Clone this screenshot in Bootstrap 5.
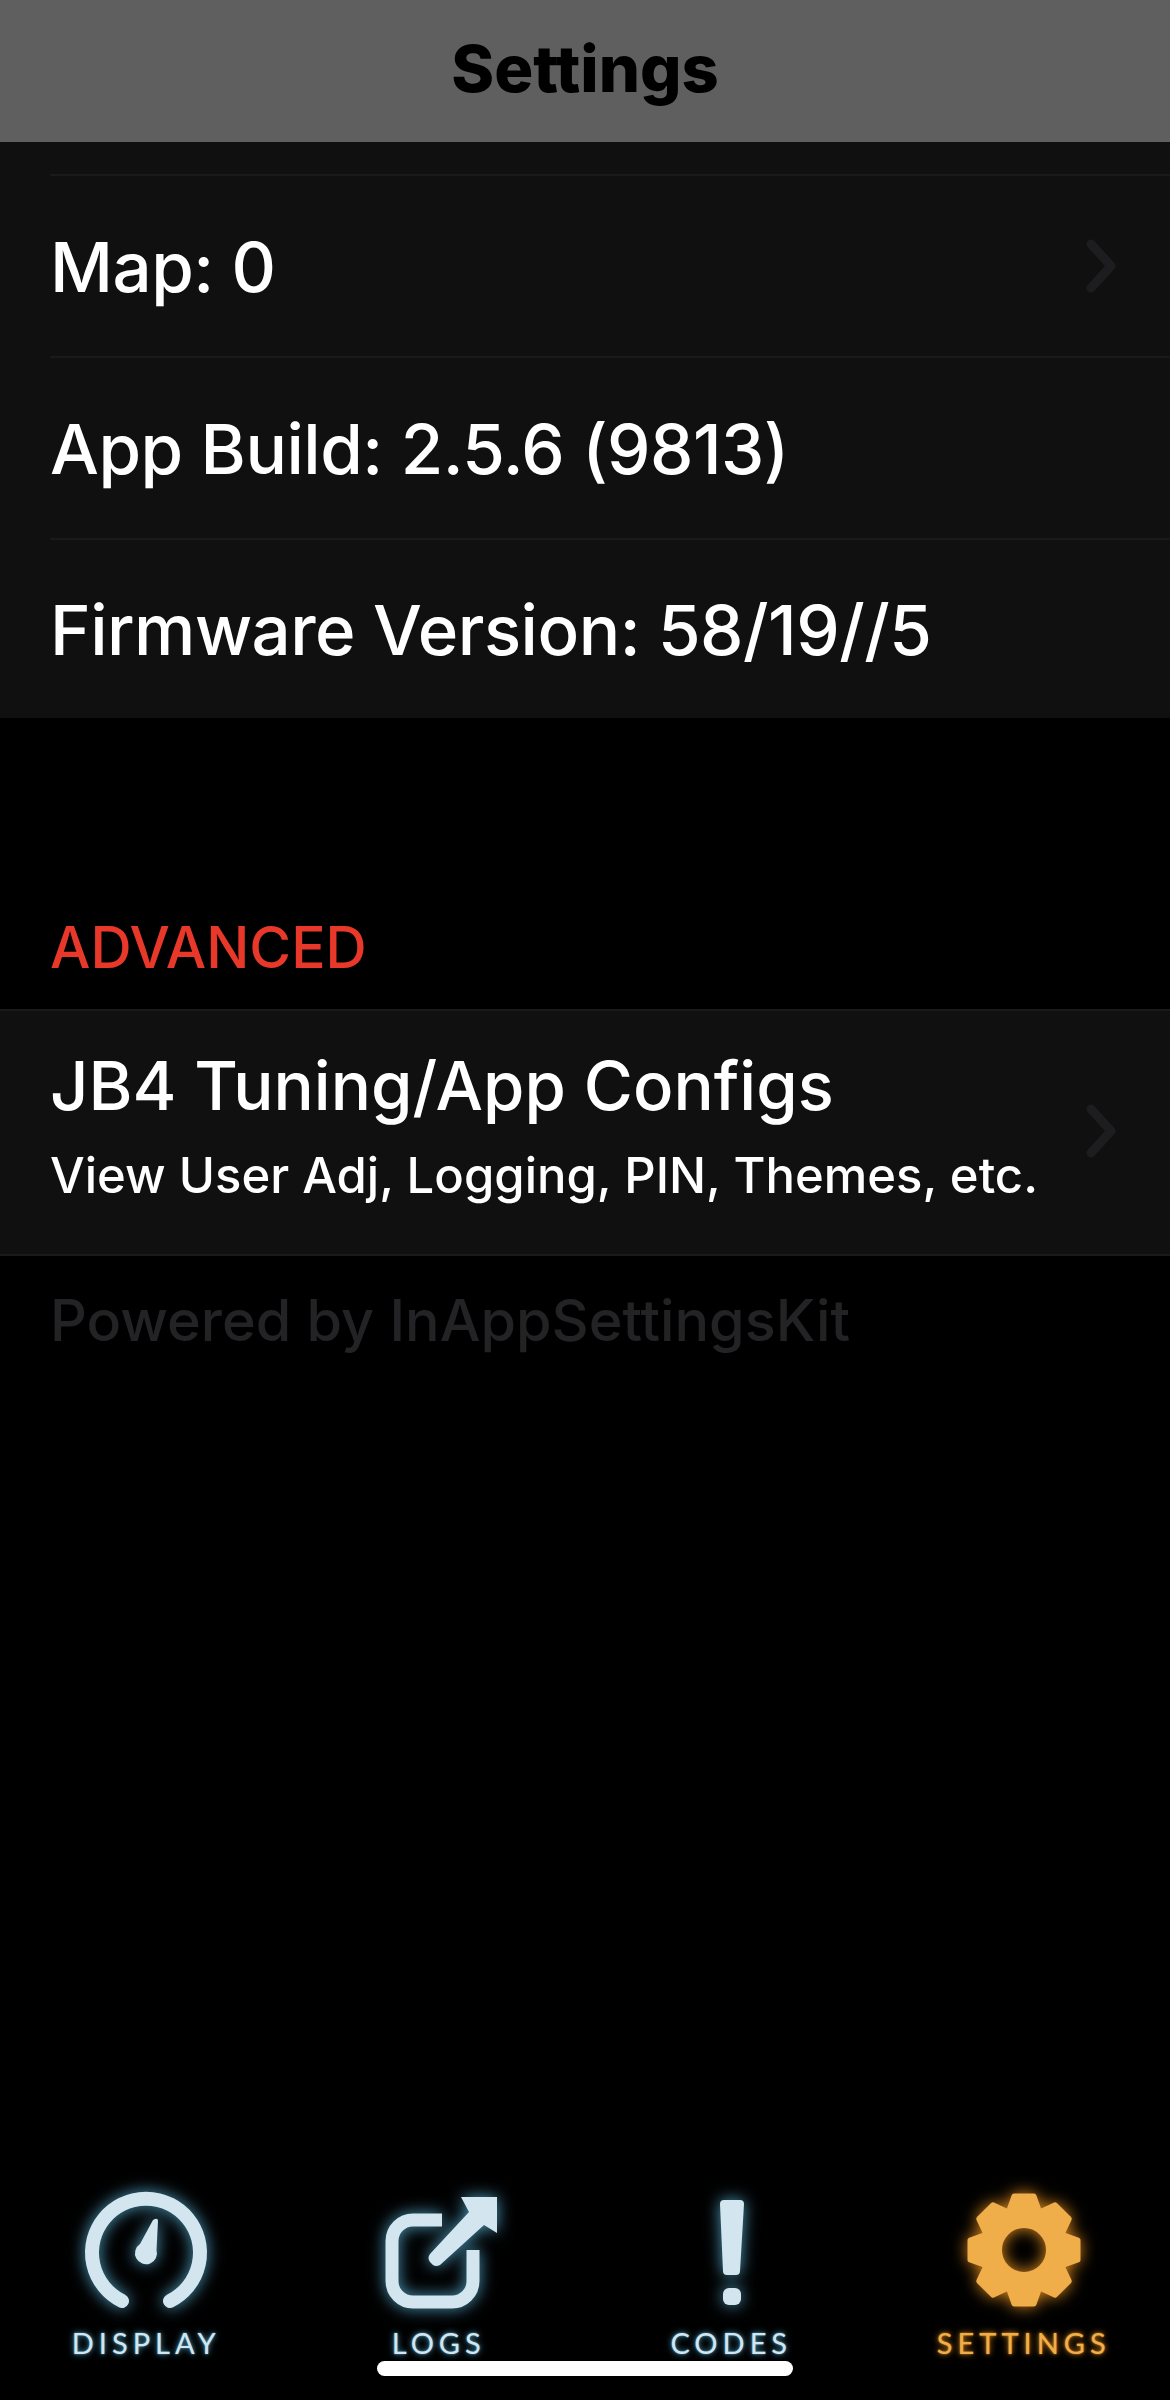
<!DOCTYPE html>
<html lang="en">

<head>
  <meta charset="UTF-8">
  <meta name="viewport" content="width=device-width, initial-scale=1.0">
  <title>Settings</title>
  <link href="https://cdn.jsdelivr.net/npm/bootstrap@5.3.0/dist/css/bootstrap.min.css" rel="stylesheet">
  <style>
    body {
      background-color: #000;
      font-family: Inter, "Liberation Sans", sans-serif;
    }

    .app-screen {
      height: 2400px;
    }

    .title-bar {
      height: 142px;
      background-color: #5f5f5f;
      color: #000;
      font-size: 65px;
      font-weight: 800;
      padding: 0 0 5px;
    }

    .settings-group {
      background-color: #101010;
      border-radius: 0;
    }

    .settings-group .list-group-item {
      background-color: transparent;
      color: #fff;
      border: 0;
      border-top: 2px solid #1a1a1a;
      border-radius: 0;
      margin-left: 50px;
      padding: 0 50px 0 0;
    }

    .settings-group .list-group-item:first-child {
      border-top: 0;
    }

    .group-cap {
      height: 32px;
    }

    .settings-group .plain-row {
      height: 182px;
      padding-top: 3px;
      font-size: 69px;
      font-weight: 500;
      letter-spacing: -0.5px;
    }

    .settings-group .last-row {
      height: 180px;
    }

    .chevron {
      width: 36px;
      height: 54px;
      fill: none;
      stroke: #1d1d1f;
      stroke-width: 9;
      stroke-linecap: round;
      stroke-linejoin: round;
      margin-top: -3px;
    }

    .section-head {
      margin: 199px 0 0 50px;
      height: 92px;
      color: #e8382a;
      font-size: 57px;
      font-weight: 500;
      line-height: 62px;
    }

    .full-row {
      border-top: 2px solid #1a1a1a;
      border-bottom: 2px solid #1a1a1a;
    }

    .settings-group .tall-row {
      height: 243px;
      border-top: 0;
    }

    .tall-copy {
      padding-bottom: 14px;
    }

    .tall-title {
      font-size: 67px;
      font-weight: 500;
      line-height: 80px;
    }

    .tall-sub {
      font-size: 49px;
      font-weight: 500;
      line-height: 60px;
      margin-top: 20px;
    }

    .foot-note {
      margin: 30px 0 0 50px;
      color: #232325;
      font-size: 57.500px;
      font-weight: 500;
      line-height: 68px;
    }

    .tab-strip {
      padding-bottom: 42px;
    }

    .tab-icon {
      display: block;
      width: 130px;
      height: 124px;
      overflow: visible;
      filter: drop-shadow(0 0 8px #4f9fc0);
    }

    .tab-label {
      color: #d3e6ef;
      font-family: Lato, "Open Sans", sans-serif;
      font-size: 29px;
      line-height: 30px;
      letter-spacing: 5px;
      margin-top: 12px;
      text-shadow: 0 0 6px #4f9fc0, 0 0 2px #4f9fc0;
    }

    .tab-on .tab-icon {
      filter: drop-shadow(0 0 8px #d8871c);
    }

    .tab-on .tab-label {
      color: #f0ae4a;
      text-shadow: 0 0 6px #d8871c, 0 0 2px #d8871c;
    }

    .home-bar {
      left: 377px;
      bottom: 24px;
      width: 416px;
      height: 15px;
      background-color: #fff;
      border-radius: 8px;
    }
  </style>
</head>

<body>
  <div class="app-screen position-relative d-flex flex-column">
    <div class="title-bar d-flex align-items-center justify-content-center">Settings</div>

    <div class="list-group list-group-flush settings-group">
      <div class="list-group-item group-cap"></div>
      <div class="list-group-item plain-row d-flex align-items-center justify-content-between">
        <span>Map: 0</span>
        <svg class="chevron" viewBox="0 0 36 54"><path d="M7 5 L27 27 L7 49" /></svg>
      </div>
      <div class="list-group-item plain-row d-flex align-items-center">App Build: 2.5.6 (9813)</div>
      <div class="list-group-item plain-row last-row d-flex align-items-center">Firmware Version: 58/19//5</div>
    </div>

    <div class="section-head">ADVANCED</div>

    <div class="list-group list-group-flush settings-group full-row">
      <div class="list-group-item tall-row d-flex align-items-center justify-content-between">
        <div class="tall-copy">
          <div class="tall-title">JB4 Tuning/App Configs</div>
          <div class="tall-sub">View User Adj, Logging, PIN, Themes, etc.</div>
        </div>
        <svg class="chevron" viewBox="0 0 36 54"><path d="M7 5 L27 27 L7 49" /></svg>
      </div>
    </div>

    <div class="foot-note">Powered by InAppSettingsKit</div>

    <div class="tab-strip row g-0 mt-auto text-center">
      <div class="col-3 d-flex flex-column align-items-center">
        <svg class="tab-icon" viewBox="0 0 130 124">
          <path d="M41 109 A54 54 0 1 1 89 109" fill="none" stroke="#d3e6ef" stroke-width="14" stroke-linecap="round" />
          <path d="M74 27 Q77 26 77 29 L75.500 58 A11 11 0 1 1 59 52 L72 28 Z" fill="#d3e6ef" />
        </svg>
        <div class="tab-label">DISPLAY</div>
      </div>
      <div class="col-3 d-flex flex-column align-items-center">
        <svg class="tab-icon" viewBox="0 0 130 124">
          <path d="M68 28 H39 A21 21 0 0 0 18 49 V89 A21 21 0 0 0 39 110 H78 A21 21 0 0 0 99 89 V58" fill="none" stroke="#d3e6ef" stroke-width="13" />
          <path d="M87 5 H123 V41 L110 33 L66 73 Q62 75 59 73 L56 70 Q53 66 56 62 L95 20 Z" fill="#d3e6ef" />
        </svg>
        <div class="tab-label">LOGS</div>
      </div>
      <div class="col-3 d-flex flex-column align-items-center">
        <svg class="tab-icon" viewBox="0 0 130 124">
          <path d="M58 8 H74 Q78 8 78 12 L74 79 Q74 83 70 83 H61 Q57 83 57 79 L54 12 Q54 8 58 8 Z" fill="#d3e6ef" />
          <rect x="57" y="96" width="18" height="17" rx="6" fill="#d3e6ef" />
        </svg>
        <div class="tab-label">CODES</div>
      </div>
      <div class="col-3 d-flex flex-column align-items-center tab-on">
        <svg class="tab-icon" viewBox="-65 -58 130 124">
          <g fill="#f0ae4a" stroke="#f0ae4a" stroke-width="5" stroke-linejoin="round">
            <path d="M-15 -40 L-10 -54 H10 L15 -40 Z" />
            <path d="M-15 -40 L-10 -54 H10 L15 -40 Z" transform="rotate(45)" />
            <path d="M-15 -40 L-10 -54 H10 L15 -40 Z" transform="rotate(90)" />
            <path d="M-15 -40 L-10 -54 H10 L15 -40 Z" transform="rotate(135)" />
            <path d="M-15 -40 L-10 -54 H10 L15 -40 Z" transform="rotate(180)" />
            <path d="M-15 -40 L-10 -54 H10 L15 -40 Z" transform="rotate(225)" />
            <path d="M-15 -40 L-10 -54 H10 L15 -40 Z" transform="rotate(270)" />
            <path d="M-15 -40 L-10 -54 H10 L15 -40 Z" transform="rotate(315)" />
          </g>
          <circle r="33" fill="none" stroke="#f0ae4a" stroke-width="22" />
        </svg>
        <div class="tab-label">SETTINGS</div>
      </div>
    </div>

    <div class="home-bar position-absolute"></div>
  </div>

  <script src="https://cdn.jsdelivr.net/npm/bootstrap@5.3.0/dist/js/bootstrap.bundle.min.js"></script>
</body>

</html>
